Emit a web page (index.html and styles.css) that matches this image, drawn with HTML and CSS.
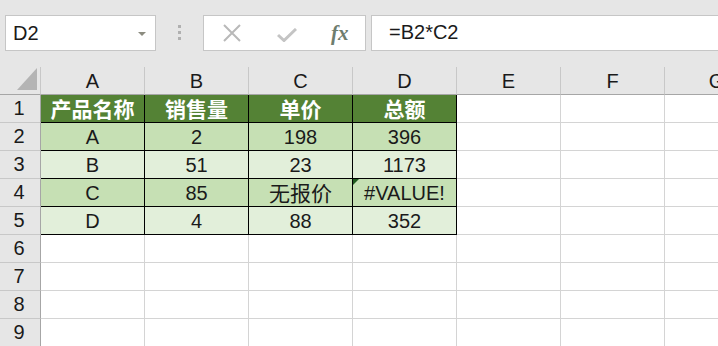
FILE: index.html
```html
<!DOCTYPE html>
<html lang="zh-CN">
<head>
    <meta charset="UTF-8">
    <title>销售表</title>
    <link rel="stylesheet" href="styles.css">
</head>
<body>
    <!-- Name box + formula bar -->
    <div class="toolbar">
        <div class="name-box">
            <span>D2</span>
            <span class="caret"></span>
        </div>
        <div class="grip"><i></i><i></i><i></i></div>
        <div class="fx-buttons">
            <svg class="icon" width="20" height="18" viewBox="0 0 20 18">
                <path d="M2 1 L18 17 M18 1 L2 17" stroke="#b9b9b9" stroke-width="2" fill="none"/>
            </svg>
            <svg class="icon" width="20" height="14" viewBox="0 0 20 14">
                <path d="M1 7 L7 12.5 L19 1" stroke="#c4c4c4" stroke-width="3" fill="none"/>
            </svg>
            <span class="fx">fx</span>
        </div>
        <div class="formula">=B2*C2</div>
    </div>

    <!-- Sheet grid -->
    <div class="sheet">
        <div class="corner"><span class="tri"></span></div>
        <div class="col-head">A</div>
        <div class="col-head">B</div>
        <div class="col-head">C</div>
        <div class="col-head">D</div>
        <div class="col-head">E</div>
        <div class="col-head">F</div>
        <div class="col-head">G</div>

        <div class="row-head">1</div>
        <div class="cell t hd zh">产品名称</div>
        <div class="cell t hd zh">销售量</div>
        <div class="cell t hd zh">单价</div>
        <div class="cell t hd zh">总额</div>
        <div class="cell"></div><div class="cell"></div><div class="cell"></div>

        <div class="row-head">2</div>
        <div class="cell t g1">A</div>
        <div class="cell t g1">2</div>
        <div class="cell t g1">198</div>
        <div class="cell t g1">396</div>
        <div class="cell"></div><div class="cell"></div><div class="cell"></div>

        <div class="row-head">3</div>
        <div class="cell t g2">B</div>
        <div class="cell t g2">51</div>
        <div class="cell t g2">23</div>
        <div class="cell t g2">1173</div>
        <div class="cell"></div><div class="cell"></div><div class="cell"></div>

        <div class="row-head">4</div>
        <div class="cell t g1">C</div>
        <div class="cell t g1">85</div>
        <div class="cell t g1 zh">无报价</div>
        <div class="cell t g1 err">#VALUE!</div>
        <div class="cell"></div><div class="cell"></div><div class="cell"></div>

        <div class="row-head">5</div>
        <div class="cell t g2">D</div>
        <div class="cell t g2">4</div>
        <div class="cell t g2">88</div>
        <div class="cell t g2">352</div>
        <div class="cell"></div><div class="cell"></div><div class="cell"></div>

        <div class="row-head">6</div>
        <div class="cell"></div><div class="cell"></div><div class="cell"></div><div class="cell"></div>
        <div class="cell"></div><div class="cell"></div><div class="cell"></div>

        <div class="row-head">7</div>
        <div class="cell"></div><div class="cell"></div><div class="cell"></div><div class="cell"></div>
        <div class="cell"></div><div class="cell"></div><div class="cell"></div>

        <div class="row-head">8</div>
        <div class="cell"></div><div class="cell"></div><div class="cell"></div><div class="cell"></div>
        <div class="cell"></div><div class="cell"></div><div class="cell"></div>

        <div class="row-head">9</div>
        <div class="cell"></div><div class="cell"></div><div class="cell"></div><div class="cell"></div>
        <div class="cell"></div><div class="cell"></div><div class="cell"></div>
    </div>
</body>
</html>
```

FILE: styles.css
```css
/* Global */
body {
    margin: 0;
    width: 718px;
    height: 346px;
    overflow: hidden;
    background: #e6e6e6;
    font-family: "Liberation Sans", "Noto Sans CJK SC", sans-serif;
    color: #1a1a1a;
}

/* Toolbar */
.toolbar {
    display: flex;
    align-items: flex-start;
    height: 67px;
    box-sizing: border-box;
    padding: 15px 0 0 5px;
}

.name-box {
    display: flex;
    align-items: center;
    justify-content: space-between;
    width: 151px;
    height: 36px;
    box-sizing: border-box;
    padding: 0 9px 0 7px;
    background: #fff;
    border: 1px solid #c6c6c6;
    font-size: 20px;
}

.caret {
    width: 0;
    height: 0;
    border-left: 4px solid transparent;
    border-right: 4px solid transparent;
    border-top: 4px solid #8c8c80;
    margin-top: 2px;
}

.grip {
    display: flex;
    flex-direction: column;
    gap: 3px;
    margin: 10px 0 0 22px;
}

.grip i {
    width: 3px;
    height: 3px;
    background: #b0b0b0;
}

.fx-buttons {
    display: flex;
    align-items: center;
    width: 163px;
    height: 36px;
    box-sizing: border-box;
    margin-left: 22px;
    padding-left: 18px;
    background: #fff;
    border: 1px solid #c6c6c6;
}

.fx-buttons .icon + .icon {
    margin-left: 35px;
    margin-top: 4px;
}

.fx {
    margin-left: 34px;
    font-family: "Liberation Serif", serif;
    font-style: italic;
    font-weight: bold;
    font-size: 21px;
    color: #6e7d6e;
}

.formula {
    flex: 1;
    height: 36px;
    box-sizing: border-box;
    margin: 0 -10px 0 5px;
    padding: 5px 0 0 17px;
    background: #fff;
    border: 1px solid #c6c6c6;
    font-size: 20px;
}

/* Sheet */
.sheet {
    display: grid;
    grid-template-columns: 41px repeat(7, 104px);
    grid-auto-rows: 28px;
    background: #fff;
}

.sheet > div {
    box-sizing: border-box;
    border-right: 1px solid #d4d4d4;
    border-bottom: 1px solid #d4d4d4;
    font-size: 20px;
    line-height: 27px;
    text-align: center;
}

.corner {
    display: flex;
    align-items: flex-end;
    justify-content: flex-end;
    padding: 0 3px 4px 0;
    background: #e6e6e6;
}

.sheet > .corner,
.sheet > .col-head {
    border-right-color: #c8c8c8;
    border-bottom-color: #a6a6a6;
    background: #e6e6e6;
}

.tri {
    width: 20px;
    height: 22px;
    background: #b4b4b4;
    clip-path: polygon(100% 0, 100% 100%, 0 100%);
}

.sheet > .row-head {
    background: #e6e6e6;
    border-right-color: #a6a6a6;
    border-bottom-color: #c8c8c8;
    padding-right: 2px;
}

.col-head {
    padding-top: 1px;
}

.cell {
    padding-top: 1px;
}

.sheet > .zh {
    font-size: 21px;
}

.sheet > .t {
    border-color: #000;
}

.hd {
    background: #548235;
    color: #fff;
    font-weight: bold;
}

.g1 {
    background: #c6e0b4;
}

.g2 {
    background: #e2efda;
}

/* error indicator in D4 */
.err {
    position: relative;
}

.err::before {
    content: "";
    position: absolute;
    left: 0;
    top: 0;
    width: 6px;
    height: 6px;
    background: #1f5a1f;
    clip-path: polygon(0 0, 100% 0, 0 100%);
}
```
